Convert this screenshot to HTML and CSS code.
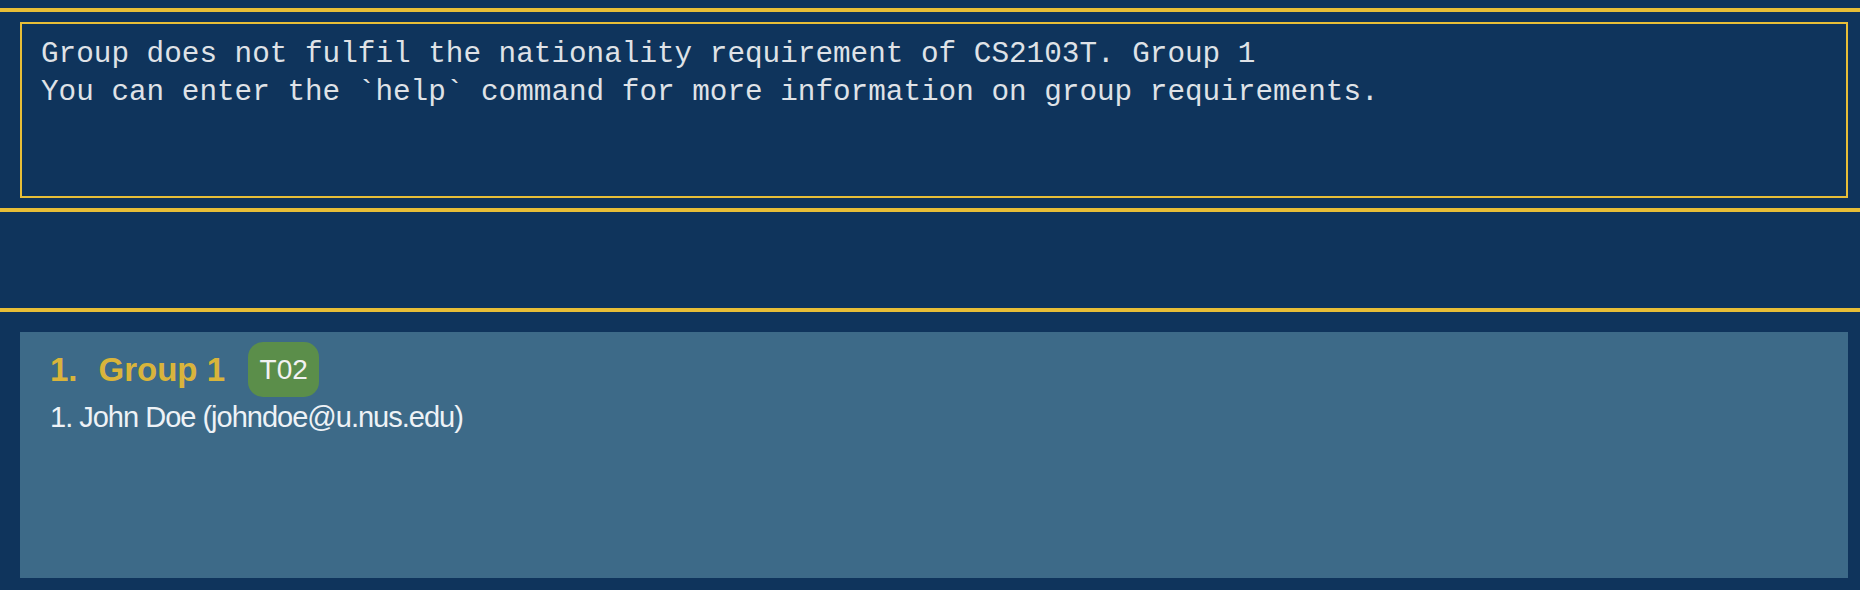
FILE: index.html
```html
<!DOCTYPE html>
<html lang="en">
<head>
<meta charset="utf-8">
<title>Groups</title>
<link rel="stylesheet" href="styles.css">
</head>
<body>
<div class="app">
  <div class="divider"></div>
  <section class="result-pane">
    <div class="result-box">
      <div class="result-line">Group does not fulfil the nationality requirement of CS2103T. Group 1</div>
      <div class="result-line">You can enter the `help` command for more information on group requirements.</div>
    </div>
  </section>
  <div class="divider"></div>
  <section class="command-pane"></section>
  <div class="divider"></div>
  <section class="list-pane">
    <div class="card">
      <div class="card-head">
        <span class="card-id">1.</span>
        <span class="card-name">Group 1</span>
        <span class="tag">T02</span>
      </div>
      <div class="member">1. John Doe (johndoe@u.nus.edu)</div>
    </div>
  </section>
</div>
</body>
</html>
```

FILE: styles.css
```css
html, body {
  margin: 0;
  padding: 0;
  background: #0f345c;
}

.app {
  width: 1860px;
  height: 590px;
  padding-top: 8px;
  box-sizing: border-box;
  display: flex;
  flex-direction: column;
  overflow: hidden;
}

.divider {
  height: 4px;
  background: #e8be37;
  flex: none;
}

.result-pane {
  padding: 10px 12px 10px 20px;
}

.result-box {
  height: 176px;
  box-sizing: border-box;
  border: 2px solid #e8be37;
  padding: 12px 19px;
  font-family: "Liberation Mono", "Courier New", monospace;
  font-size: 22pt;
  line-height: 37.5px;
  color: #dfe2e7;
}

.result-line {
  white-space: pre;
}

.command-pane {
  height: 96px;
  flex: none;
}

.list-pane {
  padding: 20px 12px 12px 20px;
}

.card {
  height: 246px;
  box-sizing: border-box;
  background: #3d6a88;
  padding: 10px 30px;
  font-family: "Liberation Sans", Arial, sans-serif;
}

.card-head {
  display: flex;
  align-items: center;
  gap: 21px;
  height: 55px;
}

.card-id,
.card-name {
  font-weight: bold;
  font-size: 33px;
  color: #d9b43b;
}

.tag {
  height: 55px;
  box-sizing: border-box;
  display: flex;
  align-items: center;
  margin-left: 2px;
  padding: 0 11.5px;
  border-radius: 15px;
  background: #5b8e4a;
  color: #f2f2f2;
  font-size: 28px;
}

.member {
  margin-top: 4px;
  font-size: 29px;
  letter-spacing: -1px;
  color: #eef2f6;
}
```
